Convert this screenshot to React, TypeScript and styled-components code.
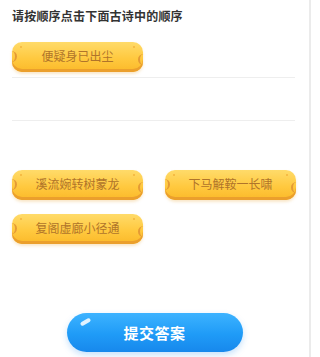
import React, { FC } from 'react'
import styled, { createGlobalStyle } from 'styled-components'

const GlobalStyle = createGlobalStyle`
  html, body {
    margin: 0;
    padding: 0;
    background: #fff;
  }
  body {
    font-family: 'Noto Sans CJK SC', 'Noto Sans', sans-serif;
  }
`

const Page = styled.div`
  width: 285px;
  height: 357px;
  border-right: 2px solid #ebebeb;
  display: flex;
  flex-direction: column;
  padding: 0 12px;
`

const Title = styled.h2`
  margin: 8px 0 0;
  font-size: 12px;
  line-height: 16px;
  font-weight: 700;
  color: #333;
  letter-spacing: 0.2px;
`

const AnswerArea = styled.div`
  margin-top: 18px;
  padding-bottom: 5px;
  border-bottom: 1px solid #eeeeee;
  width: 283px;
  min-height: 30px;
`

const Spacer = styled.div`
  width: 283px;
  height: 42px;
  border-bottom: 1px solid #eeeeee;
`

const Choices = styled.div`
  margin-top: 49px;
  display: grid;
  grid-template-columns: 131px 131px;
  column-gap: 22px;
  row-gap: 14px;
`

const Pill = styled.button`
  position: relative;
  width: 131px;
  height: 30px;
  padding: 0 0 2px;
  border: none;
  border-radius: 10px;
  background: linear-gradient(180deg, #ffdb6a 0%, #ffc93f 55%, #fbb929 100%);
  box-shadow: inset 0 -3px 0 #eb9f2c, 0 2px 3px rgba(230, 160, 40, 0.25);
  font-family: 'Noto Sans CJK SC', sans-serif;
  font-size: 12px;
  line-height: 28px;
  color: #b0742a;
  text-align: center;
  cursor: pointer;

  &::before {
    content: '';
    position: absolute;
    left: -2px;
    top: 9px;
    width: 5px;
    height: 11px;
    border-radius: 0 6px 6px 0;
    border-right: 2px solid #e49a35;
  }
  &::after {
    content: '';
    position: absolute;
    right: -1px;
    top: 12px;
    width: 4px;
    height: 11px;
    border-radius: 6px 0 0 6px;
    border-left: 2px solid #e49a35;
  }
`

const Dot = styled.span<{ side: 'left' | 'right' }>`
  position: absolute;
  top: 4px;
  ${(props) => (props.side === 'left' ? 'left: 8px;' : 'right: 8px;')}
  width: 2px;
  height: 2px;
  border-radius: 50%;
  background: #f3b33c;
`

const Footer = styled.div`
  margin-top: auto;
  margin-bottom: 5px;
  display: flex;
  justify-content: center;
  width: 285px;
`

const SubmitButton = styled.button`
  position: relative;
  width: 176px;
  height: 39px;
  border: none;
  border-radius: 20px;
  background: linear-gradient(180deg, #3db3ff 0%, #1f9bf7 55%, #1788ec 100%);
  box-shadow: 0 3px 6px rgba(30, 140, 240, 0.25);
  color: #fff;
  font-family: 'Noto Sans CJK SC', sans-serif;
  font-size: 15px;
  font-weight: 700;
  letter-spacing: 0.5px;
  cursor: pointer;

  &::before {
    content: '';
    position: absolute;
    left: 13px;
    top: 7px;
    width: 11px;
    height: 4px;
    border-radius: 3px;
    background: rgba(255, 255, 255, 0.85);
    transform: rotate(-30deg);
  }
`

const ChoicePill: FC<{ text: string }> = ({ text }) => (
  <Pill>
    <Dot side='left' />
    <Dot side='right' />
    {text}
  </Pill>
)

const App: FC = () => {
  const choices = ['溪流婉转树蒙龙', '下马解鞍一长啸', '复阁虚廊小径通']
  return (
    <>
      <GlobalStyle />
      <Page>
        <Title>请按顺序点击下面古诗中的顺序</Title>
        <AnswerArea>
          <ChoicePill text='便疑身已出尘' />
        </AnswerArea>
        <Spacer />
        <Choices>
          {choices.map((c) => (
            <ChoicePill key={c} text={c} />
          ))}
        </Choices>
        <Footer>
          <SubmitButton>提交答案</SubmitButton>
        </Footer>
      </Page>
    </>
  )
}

export default App
